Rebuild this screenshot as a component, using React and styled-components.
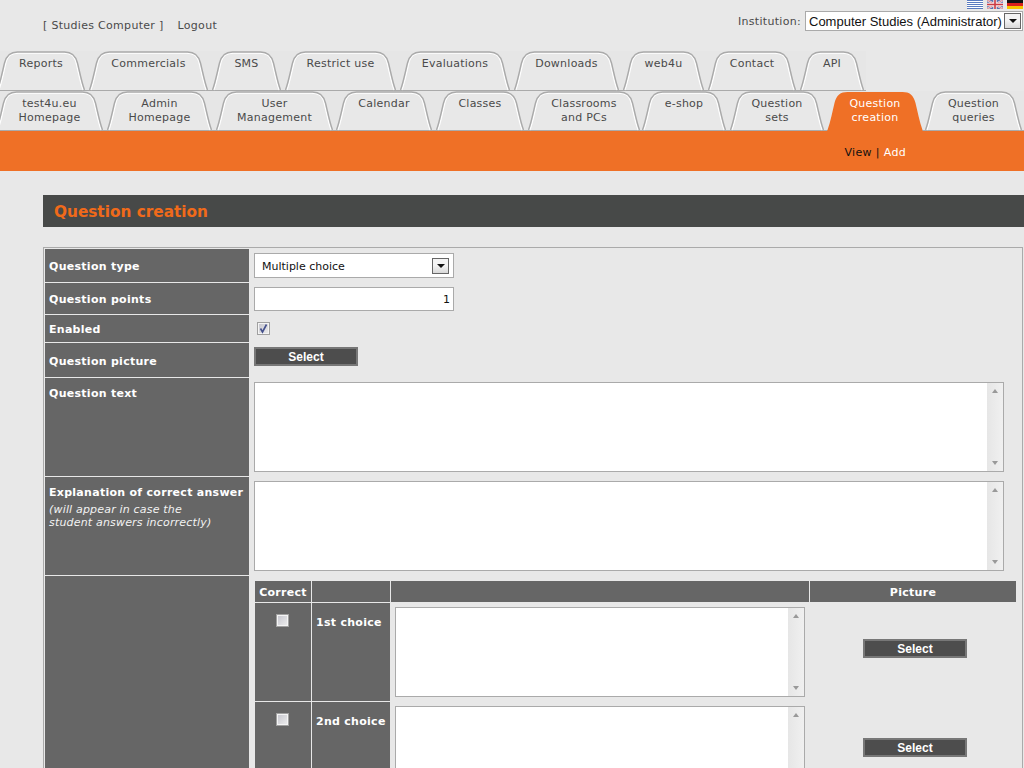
import { Fragment } from "react";
import styled, { createGlobalStyle } from "styled-components";

const GlobalStyle = createGlobalStyle`
  html, body {
    margin: 0;
    height: 768px;
    overflow: hidden;
    background: #e8e8e8;
    font-family: "DejaVu Sans", Verdana, sans-serif;
    font-size: 11px;
    color: #4a4a4a;
  }
`;

const topTabs = [
  { label: "Reports", width: 88, gap: 0 },
  { label: "Commercials", width: 119, gap: 4 },
  { label: "SMS", width: 69, gap: 4 },
  { label: "Restrict use", width: 111, gap: 4 },
  { label: "Evaluations", width: 110, gap: 4 },
  { label: "Downloads", width: 105, gap: 4 },
  { label: "web4u", width: 81, gap: 4 },
  { label: "Contact", width: 88, gap: 4 },
  { label: "API", width: 64, gap: 4 },
];

const bottomTabs = [
  { label: ["test4u.eu", "Homepage"], width: 107, gap: 0 },
  { label: ["Admin", "Homepage"], width: 105, gap: 4 },
  { label: ["User", "Management"], width: 117, gap: 4 },
  { label: ["Calendar"], width: 96, gap: 3 },
  { label: ["Classes"], width: 88, gap: 4 },
  { label: ["Classrooms", "and PCs"], width: 112, gap: 4 },
  { label: ["e-shop"], width: 84, gap: 2 },
  { label: ["Question", "sets"], width: 94, gap: 4 },
  { label: ["Question", "creation"], width: 96, gap: 3, active: true },
  { label: ["Question", "queries"], width: 97, gap: 2 },
];

const TopBar = styled.header`
  display: flex;
  justify-content: space-between;
  height: 51px;
  letter-spacing: 0.3px;
`;

const UserLinks = styled.div`
  display: flex;
  gap: 14px;
  padding: 19px 0 0 43px;
  line-height: 14px;
`;

const TopRight = styled.div`
  display: flex;
  flex-direction: column;
  align-items: flex-end;
  gap: 2px;
  padding-right: 1px;
`;

const Flags = styled.div`
  display: flex;
  gap: 4px;
  height: 9px;
`;

const InstitutionRow = styled.div`
  display: flex;
  align-items: center;
  gap: 4px;
`;

const SelectBox = styled.div`
  box-sizing: border-box;
  display: flex;
  align-items: center;
  justify-content: space-between;
  width: ${(p) => p.$width}px;
  height: ${(p) => p.$height}px;
  padding: ${(p) => p.$padding};
  background: #fff;
  border: 1px solid #aaa;
  color: #111;
  font-family: ${(p) => p.$font || "inherit"};
  font-size: ${(p) => p.$size || 11}px;
  letter-spacing: 0;
  white-space: nowrap;
`;

const ArrowButton = styled.span`
  box-sizing: border-box;
  display: flex;
  align-items: center;
  justify-content: center;
  width: 17px;
  height: 16px;
  border: 1px solid #666;
  background: linear-gradient(#f4f4f4 0%, #f4f4f4 45%, #d8d8d8 100%);

  &::after {
    content: "";
    border-left: 4px solid transparent;
    border-right: 4px solid transparent;
    border-top: 4px solid #111;
  }
`;

const TabRow = styled.nav`
  display: flex;
  height: 40px;
  margin-left: ${(p) => p.$offset}px;
  width: ${(p) => p.$width};
  background: #e6e6e6;
  box-shadow: inset 0 -1px 0 #aaa;
`;

const Tab = styled.a`
  position: relative;
  flex: none;
  box-sizing: border-box;
  width: ${(p) => p.$width}px;
  margin-left: ${(p) => p.$gap}px;
  padding-top: 6px;
  height: 40px;
  text-align: center;
  line-height: 14px;
  letter-spacing: 0.25px;
  color: ${(p) => (p.$active ? "#fff" : "#4a4a4a")};
`;

const TabShape = styled.svg`
  position: absolute;
  left: 0;
  top: 0;
`;

const TabText = styled.span`
  position: relative;
  display: block;
`;

const SubBar = styled.div`
  display: flex;
  justify-content: flex-end;
  gap: 4px;
  box-sizing: border-box;
  height: 40px;
  padding: 15px 118px 0 0;
  line-height: 14px;
  letter-spacing: 0.3px;
  background: #ef7026;
  color: #111;
`;

const AddLink = styled.a`
  color: #fff;
`;

const Main = styled.main`
  padding: 24px 0 0 43px;
`;

const Heading = styled.h1`
  box-sizing: border-box;
  height: 32px;
  margin: 0 0 20px;
  padding: 0 11px;
  background: #474948;
  color: #f06a1a;
  font-size: 15.3px;
  font-weight: bold;
  line-height: 34px;
`;

const Form = styled.form`
  box-sizing: border-box;
  display: grid;
  grid-template-columns: 204px 1fr;
  grid-template-rows: 33px 31px 27px 34px 98px 98px auto;
  row-gap: 1px;
  width: 980px;
  margin: 0;
  padding: 1px;
  border: 1px solid #aaa;
`;

const Label = styled.div`
  box-sizing: border-box;
  padding: ${(p) => (p.$tall ? "9px 4px 0" : `${p.$nudge || 2}px 4px 0`)};
  display: flex;
  flex-direction: column;
  justify-content: ${(p) => (p.$tall ? "flex-start" : "center")};
  background: #666;
  color: #fff;
  font-weight: bold;
  line-height: 14px;
  letter-spacing: 0.28px;
  white-space: nowrap;
`;

const Hint = styled.em`
  display: block;
  margin-top: 3px;
  font-weight: normal;
  line-height: 13px;
  letter-spacing: 0.18px;
  color: #f2f2f2;
`;

const Field = styled.div`
  box-sizing: border-box;
  padding: ${(p) => p.$top || 4}px 0 0 5px;
`;

const NumberInput = styled.input`
  box-sizing: border-box;
  display: block;
  width: 200px;
  height: 24px;
  padding: 1px 3px 0;
  background: #fff;
  border: 1px solid #aaa;
  outline: none;
  color: #111;
  font-family: inherit;
  font-size: 11px;
  text-align: right;
`;

const CheckBox = styled.span`
  box-sizing: border-box;
  display: flex;
  align-items: center;
  justify-content: center;
  width: 13px;
  height: 13px;
  margin-left: ${(p) => p.$left || 0}px;
  border: 1px solid #a0a0a0;
  box-shadow: inset 0 0 0 1px #f4f4f4;
  background: linear-gradient(135deg, #c4c4cc, #eeeeee);
`;

const SelectButton = styled.button`
  box-sizing: border-box;
  display: block;
  width: 104px;
  height: 19px;
  padding: 0;
  background: #4d4d4d;
  border: 2px solid #777;
  color: #fff;
  font-family: "Liberation Sans", Arial, sans-serif;
  font-size: 12px;
  font-weight: bold;
  line-height: 14px;
`;

const TextBox = styled.div`
  box-sizing: border-box;
  display: flex;
  width: ${(p) => p.$width}px;
  height: 90px;
  background: #fff;
  border: 1px solid #aaa;
`;

const TextInput = styled.textarea`
  flex: 1;
  min-width: 0;
  padding: 2px;
  border: 0;
  outline: none;
  resize: none;
  overflow: hidden;
  background: #fff;
  font-family: inherit;
  font-size: 11px;
`;

const ScrollTrack = styled.div`
  flex: none;
  display: flex;
  flex-direction: column;
  justify-content: space-between;
  align-items: center;
  width: 16px;
  padding: 6px 0;
  box-sizing: border-box;
  background: linear-gradient(90deg, #e6e6e6, #f0f0f0);
`;

const ScrollArrow = styled.span`
  width: 0;
  height: 0;
  border-left: 3.5px solid transparent;
  border-right: 3.5px solid transparent;
  ${(p) => (p.$up ? "border-bottom" : "border-top")}: 4px solid #999;
`;

const ChoiceGrid = styled.div`
  display: grid;
  grid-template-columns: 56px 78px 418px 206px;
  grid-template-rows: 21px 98px 98px;
  gap: 1px;
  margin-left: 1px;
`;

const HeadCell = styled.div`
  background: #666;
  color: #fff;
  font-weight: bold;
  line-height: 23px;
  letter-spacing: 0.28px;
  text-align: center;
  white-space: nowrap;
`;

const CorrectCell = styled.div`
  display: flex;
  justify-content: center;
  padding: 11px 1px 0 0;
  background: #666;
`;

const ChoiceLabel = styled.div`
  padding: 13px 0 0 4px;
  background: #666;
  color: #fff;
  font-weight: bold;
  line-height: 14px;
  letter-spacing: 0.28px;
  white-space: nowrap;
`;

const ChoiceText = styled.div`
  padding: 4px 0 0 4px;
`;

const PictureCell = styled.div`
  display: flex;
  justify-content: center;
  padding: 36px 0 0 4px;
`;

const GreekFlag = () => (
  <svg width="16" height="9" viewBox="0 0 16 9">
    <rect width="16" height="9" fill="#fff" />
    <rect y="0" width="16" height="1" fill="#5b7cc0" />
    <rect y="2" width="16" height="1" fill="#5b7cc0" />
    <rect y="4" width="16" height="1" fill="#5b7cc0" />
    <rect y="6" width="16" height="1" fill="#5b7cc0" />
    <rect y="8" width="16" height="1" fill="#5b7cc0" />
  </svg>
);

const BritishFlag = () => (
  <svg width="16" height="9" viewBox="0 0 16 9">
    <rect width="16" height="9" fill="#5a70ae" />
    <path d="M0 0L16 9M16 0L0 9" stroke="#f4e4e4" strokeWidth="2" />
    <path d="M0 0L16 9M16 0L0 9" stroke="#d0606a" strokeWidth="0.7" />
    <path d="M8 0V9M0 4.5H16" stroke="#f6eaea" strokeWidth="3.4" />
    <path d="M8 0V9M0 4.5H16" stroke="#cc3a44" strokeWidth="1.6" />
  </svg>
);

const GermanFlag = () => (
  <svg width="16" height="9" viewBox="0 0 16 9">
    <rect width="16" height="3" fill="#111" />
    <rect y="3" width="16" height="3" fill="#d8201c" />
    <rect y="6" width="16" height="3" fill="#f5c500" />
  </svg>
);

// forma de la pestaña, se dibuja con el ancho de cada una
const tabPath = (w, inset = 0) => {
  const l = 0.5 + inset;
  const r = w - 0.5 - inset;
  const t = 1 + inset * 0.8;
  return `M${l} 39 C${l + 3} 31 ${l + 5} 20 ${l + 7} 12 C${l + 9} 4 ${l + 13} ${t} ${l + 20} ${t} H${r - 20} C${r - 13} ${t} ${r - 9} 4 ${r - 7} 12 C${r - 5} 20 ${r - 3} 31 ${r} 39`;
};

const NavTab = ({ width, gap, active, lines }) => (
  <Tab $width={width} $gap={gap} $active={active}>
    <TabShape width={width} height="40" viewBox={`0 0 ${width} 40`}>
      {active ? (
        <path d={`${tabPath(width)} V40 H0 Z`} fill="#ef7026" />
      ) : (
        <>
          <path d={`${tabPath(width)} Z`} fill="#e8e8e8" stroke="none" />
          <path d={tabPath(width, 1.4)} fill="none" stroke="#fff" strokeWidth="1.2" />
          <path d={tabPath(width)} fill="none" stroke="#aaa" strokeWidth="1.4" />
        </>
      )}
    </TabShape>
    {lines.map((line) => (
      <TabText key={line}>{line}</TabText>
    ))}
  </Tab>
);

const TextArea = ({ width }) => (
  <TextBox $width={width}>
    <TextInput />
    <ScrollTrack>
      <ScrollArrow $up />
      <ScrollArrow />
    </ScrollTrack>
  </TextBox>
);

const Tick = () => (
  <svg width="11" height="11" viewBox="0 0 11 11">
    <path d="M2.5 5.5L4.5 9L8.5 1.5" fill="none" stroke="#44508c" strokeWidth="1.6" />
  </svg>
);

const choices = ["1st choice", "2nd choice"];

export default function App() {
  return (
    <>
      <GlobalStyle />
      <TopBar>
        <UserLinks>
          <span>[ Studies Computer ]</span>
          <a>Logout</a>
        </UserLinks>
        <TopRight>
          <Flags>
            <GreekFlag />
            <BritishFlag />
            <GermanFlag />
          </Flags>
          <InstitutionRow>
            <span>Institution:</span>
            <SelectBox
              $width={218}
              $height={20}
              $padding="0 1px 0 3px"
              $font={`"Liberation Sans", Arial, sans-serif`}
              $size={13}
            >
              <span>Computer Studies (Administrator)</span>
              <ArrowButton />
            </SelectBox>
          </InstitutionRow>
        </TopRight>
      </TopBar>

      <TabRow $offset={-3} $width="869px">
        {topTabs.map((t) => (
          <NavTab key={t.label} width={t.width} gap={t.gap} lines={[t.label]} />
        ))}
      </TabRow>
      <TabRow $offset={-4} $width="1028px">
        {bottomTabs.map((t) => (
          <NavTab key={t.label.join()} width={t.width} gap={t.gap} active={t.active} lines={t.label} />
        ))}
      </TabRow>
      <SubBar>
        <span>View</span>
        <span>|</span>
        <AddLink>Add</AddLink>
      </SubBar>

      <Main>
        <Heading>Question creation</Heading>
        <Form>
          <Label>Question type</Label>
          <Field>
            <SelectBox $width={200} $height={25} $padding="1px 4px 0 7px">
              <span>Multiple choice</span>
              <ArrowButton />
            </SelectBox>
          </Field>

          <Label>Question points</Label>
          <Field>
            <NumberInput defaultValue="1" />
          </Field>

          <Label>Enabled</Label>
          <Field $top={7}>
            <CheckBox $left={3}>
              <Tick />
            </CheckBox>
          </Field>

          <Label $nudge={4}>Question picture</Label>
          <Field>
            <SelectButton type="button">Select</SelectButton>
          </Field>

          <Label $tall>Question text</Label>
          <Field>
            <TextArea width={750} />
          </Field>

          <Label $tall>
            Explanation of correct answer
            <Hint>
              (will appear in case the
              <br />
              student answers incorrectly)
            </Hint>
          </Label>
          <Field>
            <TextArea width={750} />
          </Field>

          <Label />
          <Field $top={5}>
            <ChoiceGrid>
              <HeadCell>Correct</HeadCell>
              <HeadCell />
              <HeadCell />
              <HeadCell>Picture</HeadCell>
              {choices.map((choice) => (
                <Fragment key={choice}>
                  <CorrectCell>
                    <CheckBox />
                  </CorrectCell>
                  <ChoiceLabel>{choice}</ChoiceLabel>
                  <ChoiceText>
                    <TextArea width={410} />
                  </ChoiceText>
                  <PictureCell>
                    <SelectButton type="button">Select</SelectButton>
                  </PictureCell>
                </Fragment>
              ))}
            </ChoiceGrid>
          </Field>
        </Form>
      </Main>
    </>
  );
}
